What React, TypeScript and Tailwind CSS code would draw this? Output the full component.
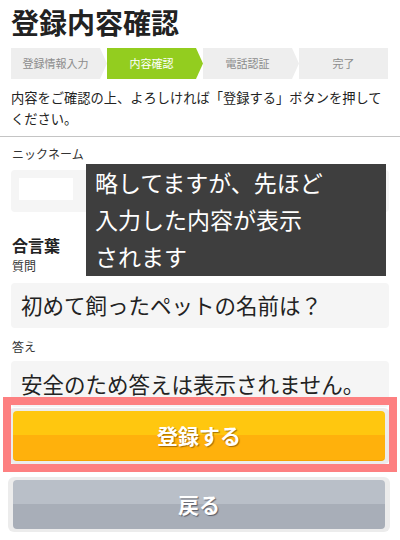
const steps = [
  { label: "登録情報入力", active: false },
  { label: "内容確認", active: true },
  { label: "電話認証", active: false },
]

export default function App() {
  return (
    <div className="relative w-[400px] h-[540px] overflow-hidden bg-white text-[#333] font-['Noto_Sans_CJK_JP','Noto_Sans',sans-serif]">
      <div className="px-[11px]">
        <h1 className="pt-[5px] text-[28px] leading-[34px] font-bold text-[#222]">登録内容確認</h1>
        <ol className="mt-[9px] flex h-[31px]">
          {steps.map((s) => (
            <li
              key={s.label}
              className={
                "flex w-[96px] items-center justify-center pr-[7px] text-[11px] [clip-path:polygon(0_0,89px_0,96px_50%,89px_100%,0_100%)] " +
                (s.active ? "bg-[#93cd1f] text-white" : "bg-[#eeeeee] text-[#8c8c8c]")
              }
            >
              {s.label}
            </li>
          ))}
          <li className="flex w-[89px] items-center justify-center bg-[#eeeeee] text-[11px] text-[#8c8c8c]">完了</li>
        </ol>
        <p className="mt-[8px] text-[13.25px] leading-[21px] text-[#222]">
          内容をご確認の上、よろしければ「登録する」ボタンを押してください。
        </p>
      </div>
      <div className="mt-[7px] h-px bg-[#c4c4c4]" />

      <div className="px-[11px]">
        <div className="mt-[8px] pl-px text-[12px] leading-[18px]">ニックネーム</div>
        <div className="mt-[7px] flex h-[42px] items-center rounded-[4px] bg-[#f5f5f5] px-[8px]">
          <div className="mb-[4px] h-[22px] w-[54px] bg-white" />
        </div>

        <div className="mt-[22px] pl-px text-[16px] leading-[22px] font-bold text-[#222]">合言葉</div>
        <div className="mt-[2px] pl-px text-[12px] leading-[16px]">質問</div>
        <div className="mt-[9px] flex h-[45px] items-center rounded-[4px] bg-[#f5f5f5] px-[10px] text-[21.5px] text-[#222]">
          初めて飼ったペットの名前は？
        </div>
        <div className="mt-[11px] pl-px text-[12px] leading-[16px]">答え</div>
        <div className="mt-[6px] flex h-[46px] items-center rounded-[4px] bg-[#f5f5f5] px-[10px] text-[21.5px] text-[#222]">
          安全のため答えは表示されません。
        </div>

        <div className="relative mt-[1px] -ml-[3px] -mr-[1px]">
          <div className="rounded-[6px] bg-[#ececec] px-[5px] py-[3px]">
            <button className="flex h-[50px] w-full items-center justify-center rounded-[4px] border-b border-[#f3a300] bg-[linear-gradient(to_bottom,#ffc70f_50%,#ffb10c_50%)] text-[21px] font-bold text-white [text-shadow:1px_1px_1px_rgba(90,50,0,0.55)]">
              登録する
            </button>
          </div>
          <div className="pointer-events-none absolute -left-[5px] -right-[7px] -top-[11px] -bottom-[8px] border-[8px] border-[#fd8081]" />
        </div>

        <div className="mt-[13px] -ml-[3px] -mr-[1px] rounded-[6px] bg-[#ececec] px-[5px] py-[3px]">
          <button className="flex h-[49px] w-full items-center justify-center rounded-[4px] bg-[linear-gradient(to_bottom,#b9bfc8_50%,#a8aeb8_50%)] text-[21px] font-bold text-white [text-shadow:1px_1px_1px_rgba(40,40,50,0.6)]">
            戻る
          </button>
        </div>
      </div>

      <div className="absolute left-[86px] top-[164px] h-[112px] w-[300px] bg-[#3e3e3e] px-[9px] text-[23px] leading-[37px] text-white">
        略してますが、先ほど
        <br />
        入力した内容が表示
        <br />
        されます
      </div>
    </div>
  )
}
